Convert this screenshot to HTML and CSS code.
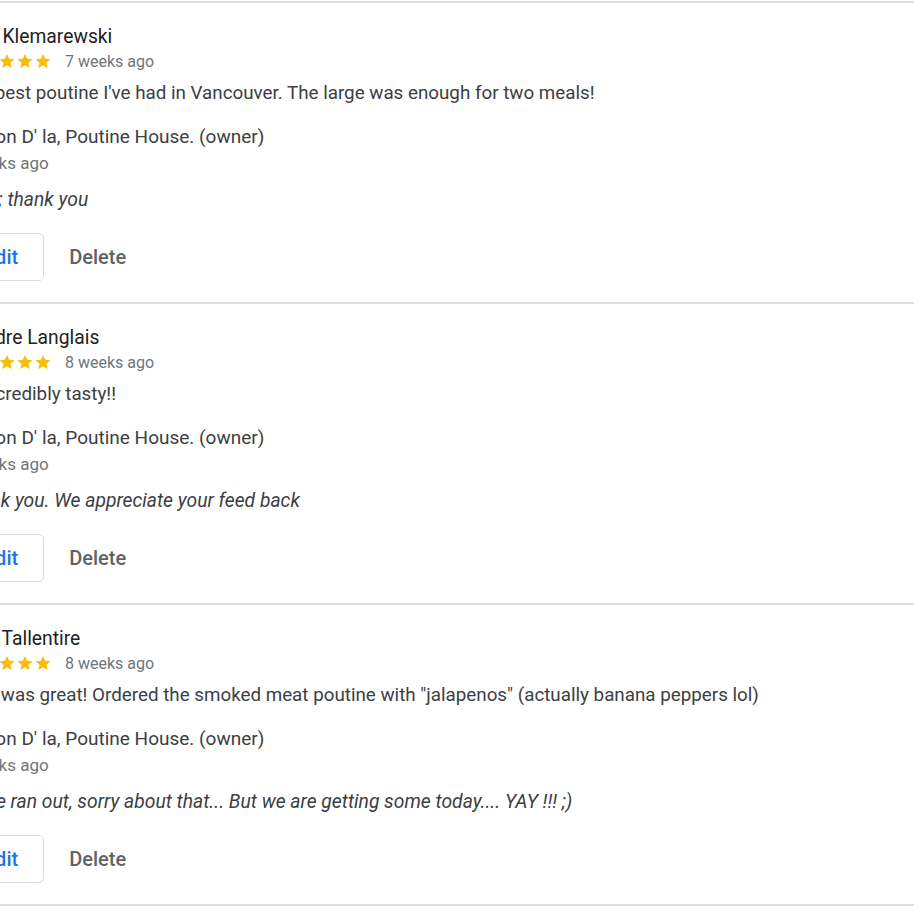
FILE: index.html
```html
<!DOCTYPE html>
<html>
<head>
<meta charset="utf-8">
<link rel="stylesheet" href="styles.css">
</head>
<body>
<div class="list">
  <section class="review">
    <div class="body">
      <div class="name">Mark Klemarewski</div>
      <div class="meta">
        <span class="stars">
          <svg class="star" viewBox="0 0 24 24"><path d="M12 2.5l2.9 6.6 7.1.6-5.4 4.7 1.6 7-6.2-3.7-6.2 3.7 1.6-7L2 9.7l7.1-.6z"/></svg>
          <svg class="star" viewBox="0 0 24 24"><path d="M12 2.5l2.9 6.6 7.1.6-5.4 4.7 1.6 7-6.2-3.7-6.2 3.7 1.6-7L2 9.7l7.1-.6z"/></svg>
          <svg class="star" viewBox="0 0 24 24"><path d="M12 2.5l2.9 6.6 7.1.6-5.4 4.7 1.6 7-6.2-3.7-6.2 3.7 1.6-7L2 9.7l7.1-.6z"/></svg>
          <svg class="star" viewBox="0 0 24 24"><path d="M12 2.5l2.9 6.6 7.1.6-5.4 4.7 1.6 7-6.2-3.7-6.2 3.7 1.6-7L2 9.7l7.1-.6z"/></svg>
          <svg class="star" viewBox="0 0 24 24"><path d="M12 2.5l2.9 6.6 7.1.6-5.4 4.7 1.6 7-6.2-3.7-6.2 3.7 1.6-7L2 9.7l7.1-.6z"/></svg>
        </span>
        <span class="time">7 weeks ago</span>
      </div>
      <div class="text">The&nbsp; best poutine I've had in Vancouver. The large was enough for two meals!</div>
      <div class="owner">Maison D' la, Poutine House. (owner)</div>
      <div class="otime">7 weeks ago</div>
      <div class="reply">Good; thank you</div>
      <div class="actions"><button class="btn edit">Edit</button><button class="btn del">Delete</button></div>
    </div>
  </section>
  <section class="review">
    <div class="body">
      <div class="name">&nbsp;Liandre Langlais</div>
      <div class="meta">
        <span class="stars">
          <svg class="star" viewBox="0 0 24 24"><path d="M12 2.5l2.9 6.6 7.1.6-5.4 4.7 1.6 7-6.2-3.7-6.2 3.7 1.6-7L2 9.7l7.1-.6z"/></svg>
          <svg class="star" viewBox="0 0 24 24"><path d="M12 2.5l2.9 6.6 7.1.6-5.4 4.7 1.6 7-6.2-3.7-6.2 3.7 1.6-7L2 9.7l7.1-.6z"/></svg>
          <svg class="star" viewBox="0 0 24 24"><path d="M12 2.5l2.9 6.6 7.1.6-5.4 4.7 1.6 7-6.2-3.7-6.2 3.7 1.6-7L2 9.7l7.1-.6z"/></svg>
          <svg class="star" viewBox="0 0 24 24"><path d="M12 2.5l2.9 6.6 7.1.6-5.4 4.7 1.6 7-6.2-3.7-6.2 3.7 1.6-7L2 9.7l7.1-.6z"/></svg>
          <svg class="star" viewBox="0 0 24 24"><path d="M12 2.5l2.9 6.6 7.1.6-5.4 4.7 1.6 7-6.2-3.7-6.2 3.7 1.6-7L2 9.7l7.1-.6z"/></svg>
        </span>
        <span class="time">8 weeks ago</span>
      </div>
      <div class="text">So incredibly tasty!!</div>
      <div class="owner">Maison D' la, Poutine House. (owner)</div>
      <div class="otime">7 weeks ago</div>
      <div class="reply">&nbsp;Thank you. We appreciate your feed back</div>
      <div class="actions"><button class="btn edit">Edit</button><button class="btn del">Delete</button></div>
    </div>
  </section>
  <section class="review">
    <div class="body">
      <div class="name">Mary Tallentire</div>
      <div class="meta">
        <span class="stars">
          <svg class="star" viewBox="0 0 24 24"><path d="M12 2.5l2.9 6.6 7.1.6-5.4 4.7 1.6 7-6.2-3.7-6.2 3.7 1.6-7L2 9.7l7.1-.6z"/></svg>
          <svg class="star" viewBox="0 0 24 24"><path d="M12 2.5l2.9 6.6 7.1.6-5.4 4.7 1.6 7-6.2-3.7-6.2 3.7 1.6-7L2 9.7l7.1-.6z"/></svg>
          <svg class="star" viewBox="0 0 24 24"><path d="M12 2.5l2.9 6.6 7.1.6-5.4 4.7 1.6 7-6.2-3.7-6.2 3.7 1.6-7L2 9.7l7.1-.6z"/></svg>
          <svg class="star" viewBox="0 0 24 24"><path d="M12 2.5l2.9 6.6 7.1.6-5.4 4.7 1.6 7-6.2-3.7-6.2 3.7 1.6-7L2 9.7l7.1-.6z"/></svg>
          <svg class="star" viewBox="0 0 24 24"><path d="M12 2.5l2.9 6.6 7.1.6-5.4 4.7 1.6 7-6.2-3.7-6.2 3.7 1.6-7L2 9.7l7.1-.6z"/></svg>
        </span>
        <span class="time">8 weeks ago</span>
      </div>
      <div class="text">Food was great! Ordered the smoked meat poutine with "jalapenos" (actually banana peppers lol)</div>
      <div class="owner">Maison D' la, Poutine House. (owner)</div>
      <div class="otime">7 weeks ago</div>
      <div class="reply">Oh we ran out, sorry about that... But we are getting some today.... YAY !!! ;)</div>
      <div class="actions"><button class="btn edit">Edit</button><button class="btn del">Delete</button></div>
    </div>
  </section>
</div>
</body>
</html>
```
FILE: styles.css
```css
html, body {
  margin: 0;
  padding: 0;
  background: #ffffff;
  overflow: hidden;
}
body {
  font-family: Roboto, "Liberation Sans", Arial, sans-serif;
  color: #3c4043;
  width: 914px;
  height: 914px;
}
.list {
  padding-top: 1px;
}
.review {
  border-top: 2px solid #dadce0;
  padding: 22px 0 21px 0;
}
.review:last-child {
  border-bottom: 2px solid #dadce0;
}
.body {
  margin-left: -46px;
  display: flex;
  flex-direction: column;
  white-space: nowrap;
}
.name {
  font-size: 19.3px;
  font-weight: 400;
  line-height: 24px;
  color: #202124;
}
.meta {
  display: flex;
  align-items: center;
  height: 20px;
  margin-top: 2px;
}
.stars {
  display: flex;
  margin-left: 8px;
}
.star {
  width: 18px;
  height: 18px;
  fill: #fbbc04;
}
.time {
  margin-left: 13px;
  font-size: 16px;
  color: #70757a;
}
.text {
  margin-top: 10px;
  font-size: 18.8px;
  line-height: 24px;
}
.owner {
  margin-top: 20px;
  font-size: 19px;
  line-height: 24px;
}
.otime {
  margin-top: 4px;
  font-size: 17px;
  line-height: 20px;
  color: #70757a;
}
.reply {
  margin-top: 15px;
  font-size: 19.3px;
  line-height: 24px;
  font-style: italic;
}
.actions {
  margin-top: 21px;
  margin-left: 4px;
  display: flex;
  gap: 8px;
}
.btn {
  font-family: Roboto, "Liberation Sans", Arial, sans-serif;
  font-size: 20px;
  font-weight: 500;
  height: 48px;
  padding: 0 25px;
  border-radius: 5px;
  background: #ffffff;
  cursor: pointer;
}
.edit {
  border: 1px solid #dadce0;
  color: #1a73e8;
}
.del {
  border: 1px solid transparent;
  color: #5f6368;
  padding: 0 16px;
}
```
